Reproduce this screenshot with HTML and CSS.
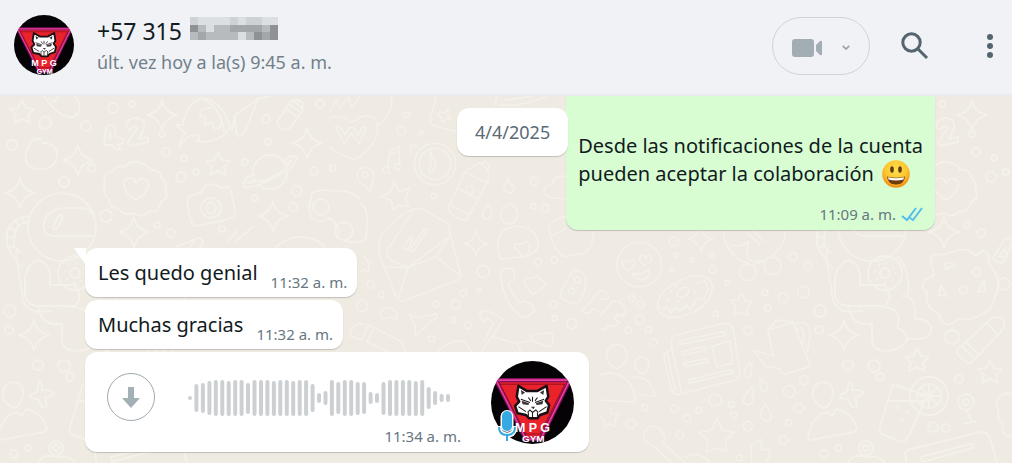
FILE: index.html
```html
<!DOCTYPE html>
<html lang="es">
<head>
<meta charset="utf-8">
<meta name="viewport" content="width=device-width, initial-scale=1">
<title>Chat</title>
<link rel="stylesheet" href="styles.css">
</head>
<body>
<svg class="defs" aria-hidden="true">
  <defs>
    <clipPath id="round"><circle cx="50" cy="50" r="50"/></clipPath>
    <symbol id="avatar" viewBox="0 0 100 100">
      <g clip-path="url(#round)">
        <rect width="100" height="100" fill="#050305"/>
        <path d="M6 23H95L60 94H42Z" fill="#e3202d" stroke="#7c1258" stroke-width="5"/>
        <path d="M6 23H95L60 94H42Z" fill="none" stroke="#ee3c9c" stroke-width="2"/>
        <path d="M11 28H89L59 88H42Z" fill="#ea222c" stroke="#8b0d1c" stroke-width="1"/>
        <path d="M33 30L31 43L34 49L29 54L32 63L42 65L46 69L56 69L59 65L68 62L70 53L66 48L69 43L67 30L56 36H43Z" fill="#fff" stroke="#181014" stroke-width="3" stroke-linejoin="round"/>
        <path d="M36 35L41 38L37 41ZM64 35L59 38L63 41ZM37 48L46 51L45 53L38 52ZM63 48L54 51L55 53L62 52ZM48 55H53L51 58Z" fill="#3b3437"/>
        <path d="M33 55L42 61M67 55L58 61M44 62L47 59L50 62L54 59L57 62M50 43V49M45 44L48 48M56 44L53 48M36 46L47 50M64 46L53 50M45 62V67M50 62V68M56 62V67" fill="none" stroke="#201a1c" stroke-width="1.3"/>
        <g fill="#fff" font-family="Liberation Sans, sans-serif" font-weight="700" text-anchor="middle">
          <text x="50" y="85" font-size="15">M P G</text>
          <text x="51" y="98" font-size="12">GYM</text>
        </g>
      </g>
    </symbol>
    <path id="spark" d="M0-15Q2-3 15 0Q3 3 0 15Q-3 3-15 0Q-2-3 0-15Z"/>
    <path id="star" d="M0-12L4-4L12-3L6 3L8 11L0 7L-8 11L-6 3L-12-3L-4-4Z"/>
    <path id="heart" d="M0 10C-18-1-13-13-6-12Q-1-12 0-6Q3-12 8-11C17-8 12 3 0 10Z"/>
    <g id="space">
      <circle cx="62" cy="227" r="34"/>
      <path d="M93 236H53Q42 234 44 223Q47 209 64 208H82Q92 209 94 218M53 227L59 215Q64 214 62 219L57 229Q53 230 53 227Z"/>
      <path d="M30 216Q12 217 7 232V246L15 259L22 268M29 222Q19 222 15 231L14 245L20 252M10 228L16 231M7 237L14 238M8 247L15 246M14 220L19 226M22 217L24 223"/>
      <path d="M18 251Q15 251 17 261L23 300Q26 310 38 312L52 311M38 260Q26 265 25 280V296Q27 305 38 306H74Q81 301 79 293L75 285H50V275Q49 263 38 260ZM39 309Q41 322 53 324H62V337Q61 350 75 351Q91 351 98 338Q118 342 121 331Q122 319 105 319Q107 295 92 296M98 340Q96 330 87 328Q94 307 71 307M88 257Q101 270 98 296"/>
      <circle cx="75" cy="273" r="17"/><circle cx="75" cy="273" r="5"/>
      <circle cx="75" cy="273" r="10" stroke-dasharray="1 7"/>
      <use href="#star" x="22" y="112"/>
      <path d="M44 96C52 108 62 119 74 117Q82 112 78 101L74 96M49 98L54 102L58 96"/>
      <circle cx="45" cy="123" r="6"/><circle cx="86" cy="126" r="5"/><circle cx="113" cy="108" r="5"/><circle cx="12" cy="145" r="5"/>
      <path d="M42 139Q31 137 29 146Q23 153 27 164Q35 172 49 168Q58 163 57 151Q53 142 42 143"/>
      <use href="#spark" x="78" y="160"/><use href="#spark" x="20" y="193"/><use href="#spark" x="134" y="232" /><use href="#spark" x="162" y="115"/>
      <path d="M106 127Q109 123 114 127L116 137L123 138V143L118 145L121 149L116 150L113 145L104 145ZM109 138L110 132L112 138ZM126 126Q128 117 137 118Q147 120 143 131L139 139L148 137V142L130 146Q126 143 130 139L137 129Q136 123 132 128Q128 131 126 126Z"/>
      <path d="M137 162Q147 164 150 170Q161 169 161 178Q169 183 165 190Q170 198 161 202Q158 214 150 211Q142 219 134 213Q124 217 119 209Q109 208 109 199Q101 193 105 184Q102 174 112 172Q117 164 125 167Q129 161 137 162Z"/>
      <use href="#heart" x="136" y="190"/>
      <path d="M120 258Q123 253 130 255L149 250Q160 248 165 256L174 250Q182 258 178 262Q189 274 188 287Q184 302 180 309Q163 322 149 319L139 325Q129 322 130 315Q112 306 118 292Q109 288 115 280L124 275Z"/>
      <path d="M134 264Q141 261 145 265L136 269ZM174 280L168 292L175 291ZM153 286A4 4 0 1 0 154 286M131 286L137 296L129 295ZM166 268A4 4 0 1 0 167 268"/>
      <path d="M183 258L195 239Q201 236 203 242L195 259Q191 267 183 258ZM189 257L195 249L197 256Z"/>
      <circle cx="194" cy="284" r="6"/><circle cx="10" cy="311" r="6"/><circle cx="9" cy="330" r="4"/>
      <use href="#spark" x="34" y="335"/><use href="#star" x="107" y="360"/><use href="#star" x="180" y="372"/>
      <circle cx="142" cy="337" r="7"/><circle cx="38" cy="365" r="5"/><circle cx="64" cy="366" r="6"/><circle cx="70" cy="377" r="4"/>
      <path d="M148 349L181 319Q188 315 193 319Q196 323 191 332L161 363Q155 364 147 353ZM177 323L188 335M156 342L169 355M152 346L165 359"/>
      <path d="M13 382Q24 383 23 395Q20 407 14 408Q1 402 3 391Q5 383 13 382ZM-2 439Q-1 423 11 414L17 412L22 416L26 409Q43 413 47 429L44 432L1 440Z"/>
      <path d="M39 382Q42 380 42 390Q50 389 54 393Q51 396 45 397L47 406L42 407L38 399L30 398Q29 394 37 392Z"/>
      <path d="M83 384L117 396L98 438Q92 444 86 440L72 434Q68 431 70 427ZM77 401H118M86 407L89 409M96 412L98 413M102 406L105 408M91 420L93 421"/>
      <circle cx="119" cy="396" r="19"/><circle cx="119" cy="396" r="12"/><path d="M119 384V408M107 396H131M111 388L127 404M127 388L111 404"/>
      <circle cx="156" cy="402" r="8"/><circle cx="156" cy="402" r="3"/><path d="M157 410L161 421M154 424L166 421"/>
      <circle cx="123" cy="427" r="5"/><circle cx="136" cy="428" r="4"/><circle cx="14" cy="454" r="4"/><circle cx="149" cy="379" r="4"/><circle cx="28" cy="448" r="3"/>
      <circle cx="56" cy="448" r="7"/><circle cx="56" cy="448" r="3"/><path d="M38 466Q40 452 56 457Q72 454 76 466"/>
      <path d="M97 466L95 453Q96 450 101 449L170 432Q177 431 180 438L188 466M111 457L160 444Q165 444 163 448L112 462Z"/>
      <path d="M203 394Q190 391 187 402Q187 408 189 411Q186 420 193 423Q190 433 200 437"/>
      <circle cx="92" cy="168" r="4"/><circle cx="64" cy="182" r="5"/><circle cx="106" cy="216" r="6"/><circle cx="171" cy="233" r="4"/><circle cx="157" cy="225" r="3"/><circle cx="166" cy="152" r="4"/><circle cx="162" cy="134" r="3"/><circle cx="184" cy="158" r="3"/><circle cx="181" cy="177" r="5"/><circle cx="196" cy="172" r="3"/><circle cx="132" cy="104" r="3"/>
    </g>
  </defs>
</svg>

<header class="topbar">
  <svg class="topbar-avatar" role="img" aria-label="MPG GYM"><use href="#avatar"/></svg>
  <div class="contact">
    <h1 class="contact-name">+57 315
      <svg class="masked" viewBox="0 0 11 3" preserveAspectRatio="none" role="img" aria-label="número oculto" shape-rendering="crispEdges">
        <path fill="#dcdfe2" d="M0 0h11v3H0z"/>
        <path fill="#cfd2d5" d="M0 0h1v1H0zM5 0h1v1H5zM7 0h2v1H7zM10 1h1v1h-1z"/>
        <path fill="#8f9295" d="M0 1h1v1H0zM8 2h1v1H8zM10 2h1v1h-1zM10 1h1v1h-1z"/>
        <path fill="#a4a7aa" d="M1 2h1v1H1zM5 1h2v1H5zM7 1h2v1H7zM9 2h1v1H9z"/>
        <path fill="#b8bbbe" d="M0 2h1v1H0zM1 1h1v1H1zM2 2h4v1H2zM3 1h2v1H3zM9 1h1v1H9zM7 2h1v1H7z"/>
      </svg>
    </h1>
    <p class="contact-status">últ. vez hoy a la(s) 9:45 a. m.</p>
  </div>
  <div class="actions">
    <button class="call" type="button" aria-label="Videollamada">
      <svg class="icon-video" viewBox="0 0 30 18"><rect width="22" height="18" rx="3"/><path d="M24 6L28 2Q30 1 30 3V15Q30 17 28 16L24 12Z"/></svg>
      <svg class="icon-chevron" viewBox="0 0 10 6"><path d="M1 1L5 5L9 1"/></svg>
    </button>
    <button class="plain" type="button" aria-label="Buscar">
      <svg class="icon-search" viewBox="0 0 28 28"><circle cx="10.500" cy="10.500" r="8.700"/><path d="M17 17L26 26"/></svg>
    </button>
    <button class="plain" type="button" aria-label="Menú">
      <svg class="icon-menu" viewBox="0 0 6 24"><circle cx="3" cy="3" r="3"/><circle cx="3" cy="12" r="3"/><circle cx="3" cy="21" r="3"/></svg>
    </button>
  </div>
</header>

<main class="chat">
  <svg class="doodles" viewBox="0 96 1012 367" preserveAspectRatio="xMinYMin slice" aria-hidden="true">
    <use href="#space"/>
    <use href="#space" x="810"/>
    <path d="M179 148Q180 138 185 133L176 125H183Q185 105 202 98Q220 98 231 128L228 130Q223 139 206 142L197 141L200 135Q187 133 179 148ZM202 98Q221 108 224 130M211 108Q200 107 200 115L206 118L204 125L212 122L214 128Q221 131 221 122"/>
    <path d="M235 115L258 99L250 119Q241 145 236 132ZM258 99L270 96M235 115L232 130"/>
    <path d="M277 122L290 102Q297 97 303 103L302 112L290 128Q280 133 277 122ZM286 109L296 116M290 105L299 111M294 101L302 108"/>
    <use href="#star" x="218" y="164"/><use href="#spark" x="307" y="143"/><use href="#spark" x="273" y="216"/>
    <circle cx="270" cy="172" r="17"/>
    <path d="M252 175Q241 181 244 187Q250 189 270 180Q296 167 297 158Q293 153 284 160L286 164L292 160Q288 170 265 180L248 183L254 180" fill="#efeae2"/>
    <path d="M190 196L202 192L205 186L215 184L221 188L228 187Q232 188 235 214Q234 217 229 219L197 226Q192 226 190 217Q185 200 190 196Z"/>
    <circle cx="211" cy="208" r="10"/><circle cx="211" cy="208" r="5"/>
    <path d="M228 241L237 231M236 241L254 226M176 247L194 240M276 247Q290 236 301 237Q316 237 325 247"/>
    <path d="M311 194Q320 188 333 191Q350 189 360 199M312 196Q306 210 313 219Q322 224 330 218Q342 229 337 238M360 204Q370 205 366 239Q356 246 341 239"/>
    <circle cx="321" cy="207" r="8"/><circle cx="344" cy="231" r="9"/>
    <circle cx="266" cy="119" r="4"/><circle cx="268" cy="142" r="3"/><circle cx="320" cy="104" r="4"/><circle cx="245" cy="162" r="3"/><circle cx="314" cy="171" r="4"/><circle cx="297" cy="191" r="5"/><circle cx="293" cy="207" r="4"/><circle cx="255" cy="198" r="3"/><circle cx="222" cy="229" r="3"/><circle cx="333" cy="168" r="3"/>
    <g transform="translate(330 90) scale(.3333)" stroke-width="5">
      <path d="M0 60L20 30L30 55L55 20L65 50L90 20M185 20Q190 70 147 104M0 85Q35 68 66 99Q105 65 135 85Q155 125 127 160Q105 195 76 208Q30 200 0 170M16 110L43 163L63 130L88 160L109 113L96 112L84 135L70 112H58L45 135L31 110Z"/>
      <path d="M318 20L300 90Q300 103 315 108L380 125M500 20L495 45M510 45Q570 52 647 20M525 30L600 20"/>
      <path d="M329 65L342 70L355 60L353 77L363 87L348 86L338 98L334 82L321 76Z"/>
      <circle cx="315" cy="222" r="62"/><circle cx="315" cy="222" r="47"/><path d="M302 185L318 225L305 248L295 243L302 225Z"/>
      <path d="M242 190Q236 168 250 165L262 172M174 230L180 182L208 170V223M180 195L208 184"/><circle cx="168" cy="240" r="9"/><circle cx="202" cy="230" r="9"/>
      <path d="M105 232Q134 236 131 260L122 303L88 275Q69 240 105 232Z"/><circle cx="105" cy="255" r="9"/>
      <path d="M193 276L209 305L238 293L226 326L237 349L207 345L190 360L183 330L150 320L180 308Z"/>
      <path d="M353 358L405 245L448 218Q480 237 477 265L410 390Q380 393 353 358ZM405 245L475 280M382 295L450 330M360 345L415 372M453 224L465 215L479 228L471 242"/><circle cx="420" cy="300" r="12"/>
      <path d="M535 264L522 287Q520 307 541 309Q560 300 550 287Q535 285 535 264ZM474 340L458 367Q456 389 473 387Q489 385 486 366ZM538 340Q562 350 563 374Q562 398 538 403Q513 397 513 374Q513 349 538 340ZM710 260Q670 252 670 282Q640 285 643 306Q646 328 710 326"/>
      <path d="M147 460L157 430Q205 375 245 359Q268 352 283 360L349 398Q359 405 358 420L361 435L393 555Q392 565 385 570L220 633Q205 635 198 620L165 535Q144 500 147 460ZM165 532H235L361 437M235 532L205 625M235 532L318 500L390 557M250 362L172 480Q167 500 190 515L235 532M358 440L318 500"/>
      <path d="M220 475L242 440L248 445L235 480ZM240 480L285 415L292 420L250 485Z"/>
      <path d="M440 421Q443 455 475 461Q444 467 438 496Q431 466 402 461Q435 453 440 421Z"/>
      <path d="M505 490Q495 420 550 410Q620 405 625 467Q615 495 580 500L515 508ZM582 500L555 475Q550 455 572 463Q590 445 600 470Q600 490 582 500Z"/>
      <path d="M656 410Q670 385 705 380M656 410Q667 480 703 500L765 490Q792 465 790 425M660 440L708 415"/>
      <path d="M512 545Q520 530 548 538Q560 552 549 572L535 582Q550 625 572 638L580 632Q610 640 614 660Q600 680 578 682Q515 640 512 545ZM607 612L585 582Q580 560 608 565Q620 550 632 568L647 578Q640 600 607 612Z"/>
      <path d="M730 540Q775 545 766 585Q760 640 725 640L692 624Q690 605 700 590ZM810 600L755 665L775 670L790 655L810 665"/><circle cx="742" cy="570" r="9"/><circle cx="725" cy="603" r="9"/>
      <path d="M238 673L260 682L320 672L322 680L275 720L257 737L255 705ZM158 688Q140 665 170 653Q205 652 200 690L185 680ZM60 740Q60 715 85 700L115 705L215 755L230 790M115 705L95 750L65 740M130 715L112 755L180 790"/>
      <path d="M320 790Q350 750 400 753L430 790M448 670Q470 650 520 690L485 740L450 790M448 670L460 695L475 685L490 697L465 750M485 740L560 760L575 790M600 735L665 728Q675 760 660 770L610 755ZM560 760L610 750"/>
      <circle cx="230" cy="75" r="8"/><circle cx="214" cy="122" r="13"/><circle cx="274" cy="128" r="6"/><circle cx="311" cy="319" r="8"/><circle cx="613" cy="274" r="12"/><circle cx="610" cy="349" r="8"/><circle cx="646" cy="355" r="12"/><circle cx="459" cy="544" r="18"/><circle cx="624" cy="517" r="11"/><circle cx="673" cy="510" r="10"/><circle cx="319" cy="643" r="9"/><circle cx="377" cy="643" r="14"/><circle cx="400" cy="609" r="10"/><circle cx="446" cy="601" r="6"/><circle cx="370" cy="690" r="8"/><circle cx="413" cy="706" r="10"/><circle cx="671" cy="644" r="11"/><circle cx="674" cy="685" r="8"/><circle cx="725" cy="701" r="15"/><circle cx="122" cy="584" r="11"/><circle cx="154" cy="614" r="8"/><circle cx="97" cy="647" r="17"/><circle cx="305" cy="746" r="9"/>
      <path d="M103 498L112 515L124 517L115 530L118 548L103 538L90 548"/>
    </g>
    <g transform="translate(600 230) scale(.3333)" stroke-width="5">
      <circle cx="118" cy="104" r="67"/><path d="M86 122Q62 110 68 95Q82 87 87 98Q95 82 105 95Q105 110 86 122ZM132 106Q112 90 122 78Q132 72 137 85Q148 68 154 85Q154 98 132 106ZM95 128Q120 140 145 118Q155 145 125 150Q105 148 95 128Z"/>
      <path d="M303-12Q306 22 340 27Q308 33 303 66Q298 35 263 27Q298 20 303-12ZM370 5Q375 60 420 90L455 105Q495 95 525 70Q555 45 555 5M398 45Q415 55 445 35L440 75Q450 100 480 92M445 10L480 45M460 0L490 35"/><circle cx="443" cy="127" r="25"/><circle cx="518" cy="108" r="26"/>
      <path d="M173 225Q177 170 275 138Q330 130 338 170Q335 220 275 250Q220 270 195 258Q172 250 173 225ZM180 232L192 240L200 230L213 250L225 232L240 242L260 225L270 240L290 205L310 210L325 175L312 150"/><ellipse cx="249" cy="187" rx="20" ry="13" transform="rotate(-35 249 187)"/><path d="M210 190L215 180M225 170L235 164M200 210L208 212M225 212L238 215M282 180L285 190M293 160L300 158"/>
      <path d="M424 191L434 210L457 215L442 235L445 257L423 247L402 254L408 230L391 210L414 209ZM0 180Q30 185 25 207L0 208M0 260L35 215Q70 210 79 245L63 260L50 252L45 268L58 278L45 290L30 285L12 300L0 295"/>
      <path d="M213 340Q212 320 230 315L370 280Q395 278 400 300L420 430Q420 445 405 450L235 494Q220 495 215 480L192 385Q190 365 215 360ZM213 340L245 490M202 368L225 480M238 333L368 305Q380 305 375 317L242 343ZM245 365L315 350L320 360L250 375ZM250 400L320 385L325 395L258 410ZM335 350L390 332L398 400L350 410ZM265 450L395 418L400 428L268 460Z"/>
      <path d="M503 300L530 270L578 275L583 290L630 400Q630 410 620 413L553 433Q540 430 538 415L500 410L458 360L520 378ZM503 300L578 278M583 285Q630 260 630 320L622 365M590 300Q610 280 612 320L608 340"/>
      <path d="M50 344Q80 345 81 375Q75 410 50 416Q20 405 20 375Q22 345 50 344ZM0 435Q40 420 75 445Q108 470 105 517L0 510M125 380Q148 385 147 405Q140 430 125 432Q105 420 104 402Q105 382 125 380ZM98 442Q150 435 166 495Q155 505 115 492"/>
      <path d="M450 398Q460 400 454 430Q450 445 438 442Q425 430 440 410ZM480 445L502 465Q505 485 490 485Q478 480 480 445ZM455 472Q465 500 455 520Q440 530 430 515Q428 500 455 472ZM495 522Q520 555 512 568Q495 580 482 562Q480 545 495 522Z"/>
      <path d="M350 565L367 600L403 608L376 632L380 665L350 655L318 665L325 630L297 608L335 600ZM30 532L35 550L55 552L45 570L48 590L28 583L12 590L14 570L0 560M455 699L453 645L485 628L483 660L512 658L500 699M150 590Q175 580 195 620L190 640L255 699M150 590Q120 610 135 635L165 652L215 699M255 680Q300 660 330 699"/>
      <circle cx="222" cy="35" r="14"/><circle cx="230" cy="76" r="7"/><circle cx="276" cy="90" r="6"/><circle cx="338" cy="118" r="11"/><circle cx="335" cy="75" r="7"/><circle cx="215" cy="118" r="6"/><circle cx="381" cy="158" r="7"/><circle cx="347" cy="252" r="8"/><circle cx="579" cy="80" r="13"/><circle cx="625" cy="107" r="12"/><circle cx="495" cy="188" r="9"/><circle cx="549" cy="203" r="15"/><circle cx="610" cy="186" r="18"/><circle cx="503" cy="234" r="10"/><circle cx="444" cy="301" r="13"/><circle cx="96" cy="205" r="9"/><circle cx="122" cy="224" r="11"/><circle cx="119" cy="269" r="14"/><circle cx="85" cy="301" r="9"/><circle cx="145" cy="299" r="9"/><circle cx="160" cy="338" r="11"/><circle cx="345" cy="510" r="18"/><circle cx="394" cy="524" r="9"/><circle cx="401" cy="556" r="9"/><circle cx="224" cy="536" r="11"/><circle cx="261" cy="565" r="11"/><circle cx="296" cy="541" r="9"/><circle cx="135" cy="533" r="9"/><circle cx="93" cy="582" r="14"/><circle cx="239" cy="615" r="11"/><circle cx="568" cy="484" r="18"/><circle cx="612" cy="450" r="13"/><circle cx="596" cy="534" r="14"/><circle cx="443" cy="589" r="14"/><circle cx="566" cy="578" r="9"/><circle cx="549" cy="630" r="13"/><circle cx="418" cy="684" r="9"/>
    </g>
  </svg>

  <div class="row-out">
    <time class="date-pill">4/4/2025</time>
    <article class="bubble bubble-out">
      <p class="text">Desde las notificaciones de la cuenta<br>pueden aceptar la colaboración
        <svg class="emoji" viewBox="0 0 28 28" role="img" aria-label="😃">
          <defs><radialGradient id="face" cx=".5" cy=".35" r=".65"><stop offset="0" stop-color="#ffe04a"/><stop offset=".6" stop-color="#fdc62e"/><stop offset="1" stop-color="#f08a16"/></radialGradient></defs>
          <circle cx="14" cy="14" r="13.800" fill="url(#face)"/>
          <ellipse cx="10" cy="9.500" rx="1.800" ry="3.300" fill="#5c3a12"/><ellipse cx="18" cy="9.500" rx="1.800" ry="3.300" fill="#5c3a12"/>
          <path d="M5 16.500Q14 19 23 16.500Q22 24.500 14 24.500Q6 24.500 5 16.500Z" fill="#6b3a10"/>
          <path d="M6 17.200Q14 19.300 22 17.200L21.500 19.500Q14 21.500 6.500 19.500Z" fill="#fff"/>
        </svg>
      </p>
      <div class="meta"><time>11:09 a. m.</time>
        <svg class="ticks" viewBox="0 0 22 15" role="img" aria-label="Leído"><path d="M1 9L6 13L15 1M9 11L12 13L21 1"/></svg>
      </div>
    </article>
  </div>

  <div class="incoming">
    <article class="bubble bubble-in">
      <svg class="tail" viewBox="0 0 12 17" aria-hidden="true"><path d="M0 0H12V17L1 2Q0 1 0 0Z"/></svg>
      <p class="text">Les quedo genial</p><time class="stamp">11:32 a. m.</time>
    </article>
    <article class="bubble bubble-in">
      <p class="text">Muchas gracias</p><time class="stamp">11:32 a. m.</time>
    </article>
    <article class="bubble voice">
      <button class="download" type="button" aria-label="Descargar audio">
        <svg class="icon-down" viewBox="0 0 18 21"><path d="M6 0H12V11H18L9 21L0 11H6Z"/></svg>
      </button>
      <div class="track">
        <svg class="wave" viewBox="0 0 262 36" aria-hidden="true"><path d="M2 18v.1M8.400 6v24M14.900 5v26M21.400 3v30M27.800 2v32M34.300 2v32M40.700 3v31M47.200 2v32M53.600 2v32M60 5v27M66.500 2v32M73 2v32M79.400 2v32M85.900 3v31M92.300 2v32M98.800 2v32M105.200 3v31M111.700 2v32M118.100 2v32M124.600 6v24M131 15v6M137.500 13v10M143.900 2v32M150.300 4v28M156.800 2v32M163.200 2v32M169.700 4v29M176.100 4v28M182.600 14v8M189 15v6M195.500 4v29M202 2v32M208.400 2v32M214.900 2v32M221.300 2v32M227.800 3v31M234.200 2v32M240.700 9v18M247.100 13v10M253.600 16v4M260 16v4"/></svg>
        <time class="stamp">11:34 a. m.</time>
      </div>
      <div class="sender">
        <svg class="sender-avatar" role="img" aria-label="MPG GYM"><use href="#avatar"/></svg>
        <svg class="mic" viewBox="0 0 20 34" aria-hidden="true">
          <path class="mic-edge" d="M2 17Q2 26 10 26Q18 26 18 17M10 26V30"/>
          <rect x="3.500" y="1" width="13" height="22" rx="6.500" fill="#fff"/>
          <path class="mic-line" d="M2 18Q2 26 10 26Q18 26 18 18M10 26V32"/>
          <rect x="5" y="2" width="10" height="20" rx="5" fill="#35a9e1"/>
        </svg>
      </div>
    </article>
  </div>
</main>
</body>
</html>
```
FILE: styles.css
```css
* { box-sizing: border-box; }
body {
  margin: 0;
  min-height: 100vh;
  display: flex;
  flex-direction: column;
  font-family: "Noto Sans", "Open Sans", sans-serif;
  font-size: 20px;
  color: #111b21;
  background: #efeae2;
}
h1, p { margin: 0; font-weight: 400; }
svg { display: block; flex: none; }
button { padding: 0; border: 0; background: none; font: inherit; cursor: pointer; }
.defs { position: absolute; width: 0; height: 0; }

.topbar {
  display: flex;
  align-items: flex-start;
  padding: 15px 19px 17px 14px;
  background: #f0f2f6;
  border-bottom: 2px solid #e9ebee;
}
.topbar-avatar { width: 60px; height: 60px; }
.contact { flex: 1; min-width: 0; margin-left: 23px; }
.contact-name { display: flex; align-items: center; gap: 8px; font-size: 23px; line-height: 32px; }
.masked { width: 88px; height: 23px; margin-bottom: 6px; }
.contact-status { font-size: 18px; line-height: 30px; color: #72808a; }
.actions { display: flex; align-items: center; margin-top: 2px; }
.call {
  display: flex;
  align-items: center;
  gap: 20px;
  width: 98px;
  height: 58px;
  padding: 3px 0 0 19px;
  margin-right: 31px;
  border: 1px solid #cfd4da;
  border-radius: 29px;
}
.icon-video { width: 30px; height: 18px; fill: #a3adb4; }
.icon-chevron { width: 8px; height: 5px; fill: none; stroke: #98a2a9; stroke-width: 2; }
.icon-search { width: 28px; height: 28px; margin-right: 58px; fill: none; stroke: #54656f; stroke-width: 3; }
.icon-menu { width: 6px; height: 24px; fill: #54656f; }

.chat { position: relative; flex: 1; overflow: hidden; padding-bottom: 10px; }
.doodles {
  position: absolute;
  inset: 0;
  width: 100%;
  height: 100%;
  fill: none;
  stroke: #f4f0ea;
  stroke-width: 2;
  stroke-linejoin: round;
  stroke-linecap: round;
}
.row-out { position: relative; display: flex; justify-content: flex-end; align-items: flex-start; padding-right: 77px; }
.date-pill {
  z-index: 1;
  margin: 12px -2px 0 0;
  padding: 0 18px;
  border-radius: 12px;
  background: #fff;
  box-shadow: 0 1px 1px #0b141a33;
  font-size: 18px;
  line-height: 48px;
  color: #5b6a74;
}
.bubble { position: relative; border-radius: 12px; background: #fff; box-shadow: 0 1px 1px #0b141a33; }
.text { font-size: 20px; line-height: 28px; }
.bubble-out { padding: 36px 12px 2px 12px; border-radius: 0 0 12px 12px; background: #d9fdd3; }
.emoji { display: inline-block; width: 28px; height: 28px; margin-left: 3px; vertical-align: -7px; }
.meta { display: flex; justify-content: flex-end; align-items: center; gap: 5px; margin-top: 12px; font-size: 15px; line-height: 28px; color: #667781; }
.ticks { width: 22px; height: 15px; fill: none; stroke: #53bdeb; stroke-width: 2; }

.incoming { display: flex; flex-direction: column; align-items: flex-start; gap: 3px; margin-top: 18px; padding-left: 85px; }
.bubble-in { display: flex; align-items: flex-end; gap: 13px; padding: 11px 10px 3px 13px; }
.bubble-in .text { padding-bottom: 7px; }
.stamp { font-size: 15px; line-height: 24px; color: #667781; }
.tail { position: absolute; top: 0; left: -11px; width: 12px; height: 17px; fill: #fff; }
.voice { display: flex; align-items: flex-start; padding: 9px 15px 4px 22px; }
.download {
  display: grid;
  place-items: center;
  width: 48px;
  height: 48px;
  margin-top: 12px;
  border: 1px solid #9faab0;
  border-radius: 50%;
}
.icon-down { width: 18px; height: 21px; fill: #a3b0b6; }
.track { display: flex; flex-direction: column; width: 273px; margin: 19px 30px 0 33px; }
.track .stamp { align-self: flex-end; margin-top: 8px; }
.wave { width: 262px; height: 36px; fill: none; stroke: #cdd0d2; stroke-width: 4; stroke-linecap: round; }
.sender { position: relative; }
.sender-avatar { width: 83px; height: 83px; }
.mic { position: absolute; left: 6px; bottom: 1px; width: 20px; height: 34px; fill: none; }
.mic-edge { stroke: #fff; stroke-width: 5; }
.mic-line { stroke: #35a9e1; stroke-width: 2; }
```
